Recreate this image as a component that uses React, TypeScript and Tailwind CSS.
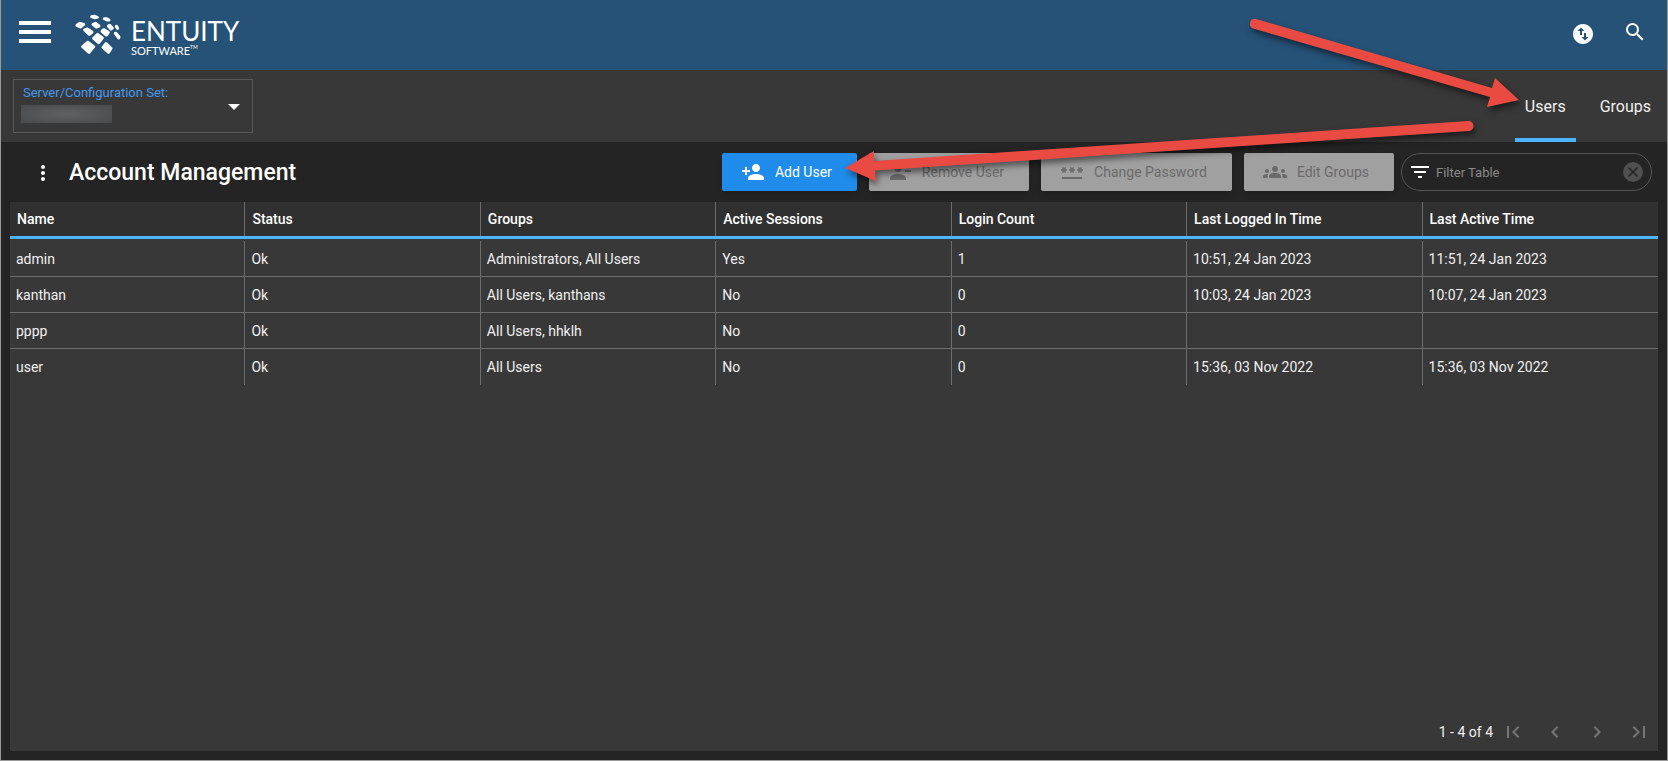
import type { ReactNode } from "react";
import {
  MdChevronLeft,
  MdChevronRight,
  MdFilterList,
  MdFirstPage,
  MdGroups,
  MdLastPage,
  MdMoreVert,
  MdPassword,
  MdPersonAdd,
  MdPersonRemove,
  MdSearch,
  MdSwapVerticalCircle,
} from "react-icons/md";

const columns = [
  "Name",
  "Status",
  "Groups",
  "Active Sessions",
  "Login Count",
  "Last Logged In Time",
  "Last Active Time",
];

const users = [
  ["admin", "Ok", "Administrators, All Users", "Yes", "1", "10:51, 24 Jan 2023", "11:51, 24 Jan 2023"],
  ["kanthan", "Ok", "All Users, kanthans", "No", "0", "10:03, 24 Jan 2023", "10:07, 24 Jan 2023"],
  ["pppp", "Ok", "All Users, hhklh", "No", "0", "", ""],
  ["user", "Ok", "All Users", "No", "0", "15:36, 03 Nov 2022", "15:36, 03 Nov 2022"],
];

function Logo() {
  return (
    <div className="mt-3.5 flex h-10 items-center gap-2.5 text-white">
      <svg
        viewBox="15 18 138 120"
        className="h-10 w-[46px]"
        fill="currentColor"
        stroke="currentColor"
        strokeWidth="9"
        strokeLinejoin="round"
        aria-hidden="true"
      >
        <path d="M65 26 74 25 82 28 73 29Z" />
        <path d="M103 32 109 32 117 36 111 36Z" />
        <path d="M21 52 30 46 41 49 31 57Z" />
        <path d="M69 49 77 46 87 54 79 57Z" />
        <path d="M115 54 119 52 127 60 123 63Z" />
        <path d="M139 55 140 55 143 61 142 61Z" />
        <path d="M44 66 52 63 66 72 58 79Z" />
        <path d="M96 70 101 65 115 73 109 81Z" />
        <path d="M136 76 138 76 147 87 146 90Z" />
        <path d="M71 91 83 79 97 90 86 104Z" />
        <path d="M38 116 53 103 71 116 57 133Z" />
        <path d="M99 118 108 107 123 121 116 133Z" />
      </svg>
      <div className="pt-2 font-['Lato',sans-serif]">
        <p className="text-[26px] leading-6">ENTUITY</p>
        <p className="flex items-start text-[11px] leading-[15px]">
          SOFTWARE<span className="text-[5px] leading-2">TM</span>
        </p>
      </div>
    </div>
  );
}

function Header() {
  return (
    <header className="flex h-[70px] items-start justify-between bg-[#265277] pr-5 pl-[18px]">
      <div className="flex items-start gap-6">
        <button aria-label="Menu" className="mt-[21px] flex w-8 flex-col gap-[5px]">
          <span className="h-1 bg-white" />
          <span className="h-1 bg-white" />
          <span className="h-1 bg-white" />
        </button>
        <Logo />
      </div>
      <div className="flex items-start gap-7 text-white">
        <button aria-label="Switch server" className="mt-[22px]">
          <MdSwapVerticalCircle className="size-6" />
        </button>
        <button aria-label="Search" className="mt-5">
          <MdSearch className="size-6" />
        </button>
      </div>
    </header>
  );
}

function ConfigBar() {
  return (
    <div className="flex h-[72px] justify-between bg-[#383838] pr-4 pl-3">
      <div className="relative mt-[9px] h-[54px] w-60 border border-[#5a5a5a] px-[9px] py-1">
        <label htmlFor="server" className="block text-[13px] leading-[18px] text-[#4299f0]">
          Server/Configuration Set:
        </label>
        <span className="mt-[3px] -ml-0.5 block h-[18px] w-[91px] bg-radial from-[#606162] to-[#484a4d]" />
        <select id="server" className="absolute inset-0 size-full cursor-pointer appearance-none" />
        <svg
          viewBox="0 0 12 6"
          className="pointer-events-none absolute top-6 right-3 h-1.5 w-3"
          fill="#fff"
          aria-hidden="true"
        >
          <path d="M0 0h12L6 6Z" />
        </svg>
      </div>
      <nav className="flex items-stretch gap-3 text-base text-[#f0f0f0]">
        <a href="#users" className="flex items-center border-b-4 border-[#4db3fd] px-2.5 pt-1.5">
          Users
        </a>
        <a href="#groups" className="flex items-center border-b-4 border-transparent pt-1.5 pl-3">
          Groups
        </a>
      </nav>
    </div>
  );
}

type ActionProps = { icon: ReactNode; label: string; primary?: boolean };

function Action({ icon, label, primary }: ActionProps) {
  return (
    <button
      disabled={!primary}
      className={`flex h-[38px] items-center gap-2.5 rounded-xs pr-[25px] pl-[19px] text-sm shadow-md ${
        primary ? "bg-[#1f8ceb] text-white" : "bg-[#a0a0a0] text-[#6a6a6a]"
      }`}
    >
      {icon}
      {label}
    </button>
  );
}

function Toolbar() {
  return (
    <div className="flex h-[60px] items-center justify-between pr-[15px] pl-[30px]">
      <div className="flex items-center gap-3.5 pt-0.5">
        <button aria-label="More options" className="text-white">
          <MdMoreVert className="size-6" />
        </button>
        <h1 className="text-[23px] font-medium text-white">Account Management</h1>
      </div>
      <div className="flex items-center gap-[7px]">
        <div className="flex gap-3">
          <Action primary icon={<MdPersonAdd className="size-6" />} label="Add User" />
          <Action icon={<MdPersonRemove className="size-6" />} label="Remove User" />
          <Action icon={<MdPassword className="size-6" />} label="Change Password" />
          <Action icon={<MdGroups className="size-6" />} label="Edit Groups" />
        </div>
        <div className="flex h-[38px] w-[251px] items-center rounded-full border border-[#555] pr-2 pl-1.5">
          <MdFilterList className="size-6 text-white" />
          <input
            aria-label="Filter Table"
            placeholder="Filter Table"
            className="ml-1 min-w-0 flex-1 pt-0.5 text-[13px] text-white outline-none placeholder:text-[#8a8a8a]"
          />
          <button aria-label="Clear filter">
            <svg viewBox="0 0 20 20" className="size-5" aria-hidden="true">
              <circle cx="10" cy="10" r="10" fill="#505050" />
              <path d="m5.5 5.5 9 9m0-9-9 9" stroke="#242424" strokeWidth="1.5" />
            </svg>
          </button>
        </div>
      </div>
    </div>
  );
}

function UserTable() {
  return (
    <table className="w-full table-fixed border-separate border-spacing-0 text-left text-sm text-[#f0f0f0]">
      <thead>
        <tr className="bg-[#303030]">
          {columns.map((name) => (
            <th
              key={name}
              className="relative h-[37px] border-b-3 border-[#4db3fd] px-[7px] font-medium text-white not-last:after:absolute not-last:after:inset-y-0 not-last:after:right-0 not-last:after:w-px not-last:after:bg-[#6c6c6c]"
            >
              {name}
            </th>
          ))}
        </tr>
      </thead>
      <tbody>
        <tr aria-hidden="true">
          <td colSpan={7} className="h-0.5 p-0" />
        </tr>
        {users.map((row) => (
          <tr key={row[0]} className="group">
            {row.map((value, i) => (
              <td
                key={columns[i]}
                className="h-9 border-r border-b border-[#6c6c6c] px-1.5 last:border-r-0 group-last:border-b-0"
              >
                {value}
              </td>
            ))}
          </tr>
        ))}
      </tbody>
    </table>
  );
}

function Pager() {
  return (
    <div className="mt-auto flex h-[38px] items-center pr-[7px] text-sm text-[#f0f0f0]">
      <span className="mr-2 ml-auto">1 - 4 of 4</span>
      <div className="flex gap-[18px] text-[#757575]">
        <button disabled aria-label="First page">
          <MdFirstPage className="size-6" />
        </button>
        <button disabled aria-label="Previous page">
          <MdChevronLeft className="size-6" />
        </button>
        <button disabled aria-label="Next page">
          <MdChevronRight className="size-6" />
        </button>
        <button disabled aria-label="Last page">
          <MdLastPage className="size-6" />
        </button>
      </div>
    </div>
  );
}

// Call-out arrows drawn over the page, anchored to the right edge
function Arrows() {
  return (
    <svg
      viewBox="0 0 840 200"
      className="pointer-events-none absolute top-0 right-0 h-[200px] w-[840px] drop-shadow-[2px_4px_3px_rgba(0,0,0,0.5)]"
      fill="#e94b43"
      aria-hidden="true"
    >
      <path d="M429 19 665 88 668 78 692 100 660 107 663 97 426 28.500A5 5 0 0 1 429 19Z" />
      <path d="M641 121A5 5 0 0 1 642 131L48 170.500 49 181 18 168 47 151 47 161Z" />
    </svg>
  );
}

export default function App() {
  return (
    <div className="relative flex min-h-screen flex-col border-x border-b border-[#999] bg-[#242424] font-['Roboto',sans-serif]">
      <Header />
      <ConfigBar />
      <Toolbar />
      <main className="mx-[9px] mb-[9px] flex flex-1 flex-col bg-[#383838]">
        <UserTable />
        <Pager />
      </main>
      <Arrows />
    </div>
  );
}
